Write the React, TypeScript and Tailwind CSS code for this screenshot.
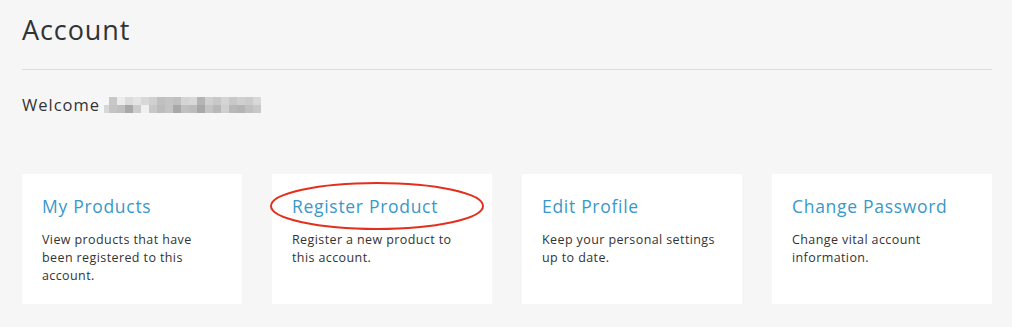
const mosaicTop = [
  'bg-[#c8c8c8]', 'bg-[#ececec]', 'bg-[#dcdcdc]', 'bg-[#e4e4e4]', 'bg-[#d8d8d8]', 'bg-[#d0d0d0]', 'bg-[#c0c0c0]',
  'bg-[#c4c4c4]', 'bg-[#c0c0c0]', 'bg-[#d4d4d4]', 'bg-[#d8d8d8]', 'bg-[#b4b4b4]', 'bg-[#d0d0d0]', 'bg-[#c8c8c8]',
  'bg-[#d4d4d4]', 'bg-[#c8c8c8]', 'bg-[#d0d0d0]', 'bg-[#cccccc]', 'bg-[#d8d8d8]',
];
const mosaicBottom = [
  'bg-[#c4c4c4]', 'bg-[#c0c0c0]', 'bg-[#a8a8a8]', 'bg-[#cccccc]', 'bg-[#f0f0f0]', 'bg-[#c8c8c8]', 'bg-[#bcbcbc]',
  'bg-[#c4c4c4]', 'bg-[#a8a8a8]', 'bg-[#c0c0c0]', 'bg-[#bcbcbc]', 'bg-[#a8a8a8]', 'bg-[#c4c4c4]', 'bg-[#b8b8b8]',
  'bg-[#d0d0d0]', 'bg-[#b8b8b8]', 'bg-[#b4b4b4]', 'bg-[#c0c0c0]', 'bg-[#c8c8c8]',
];

const cards = [
  { title: 'My Products', text: 'View products that have been registered to this account.' },
  { title: 'Register Product', text: 'Register a new product to this account.', circled: true },
  { title: 'Edit Profile', text: 'Keep your personal settings up to date.' },
  { title: 'Change Password', text: 'Change vital account information.' },
];

export default function App() {
  return (
    <div className="min-h-[327px] bg-[#f6f6f6] pl-[22px] pr-[20px] pt-[14px] pb-[23px] text-[#333] font-['Open_Sans',sans-serif]">
      {/* Header */}
      <h1 className="text-[27px] leading-[32px] tracking-[0.9px] text-[#333]">Account</h1>
      <div className="mt-[23px] h-px bg-[#dcdcdc]" />

      {/* Welcome */}
      <div className="mt-[25px] flex items-center">
        <span className="text-[16.5px] leading-[20px] tracking-[1px]">Welcome</span>
        <span className="ml-[4px] flex flex-col">
          <span className="ml-[5px] flex">
            {mosaicTop.map((c, i) => (
              <span key={i} className={`h-[8px] w-[8px] ${c}`} />
            ))}
          </span>
          <span className="flex">
            <span className="h-[8px] w-[5px] bg-[#d8d8d8]" />
            {mosaicBottom.map((c, i) => (
              <span key={i} className={`h-[8px] w-[8px] ${c}`} />
            ))}
          </span>
        </span>
      </div>

      {/* Cards */}
      <div className="mt-[59px] grid grid-cols-4 gap-[30px]">
        {cards.map((card) => (
          <div key={card.title} className="relative h-[130px] bg-white px-[20px] pt-[21px]">
            <a className="block text-[17.5px] leading-[22px] tracking-[0.7px] text-[#3a98c8]">{card.title}</a>
            <p className="mt-[14px] text-[12.5px] leading-[18px] tracking-[0.4px] text-[#333]">{card.text}</p>
            {card.circled && (
              <svg className="absolute left-[-2px] top-[7px]" width="216" height="50" viewBox="0 0 216 50">
                <ellipse cx="107" cy="25" rx="106" ry="23" fill="none" stroke="#e2301c" strokeWidth="2" />
              </svg>
            )}
          </div>
        ))}
      </div>
    </div>
  );
}
